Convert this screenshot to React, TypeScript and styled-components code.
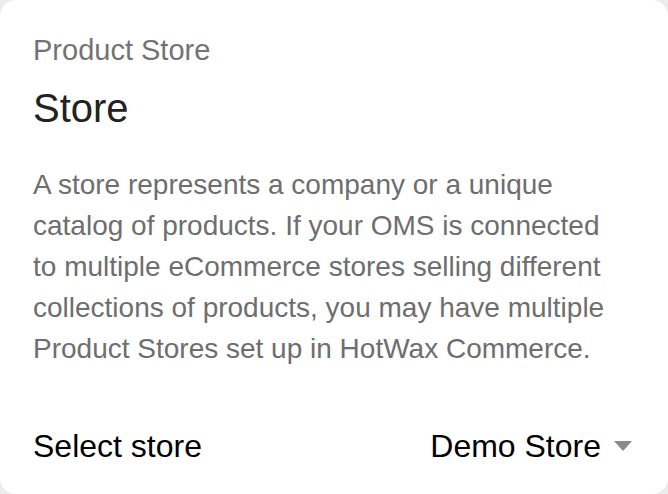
import React from "react";
import styled, { createGlobalStyle } from "styled-components";

const Global = createGlobalStyle`
  html, body { margin: 0; padding: 0; background: #ececec; }
  body { font-family: "Liberation Sans", Arial, Helvetica, sans-serif; }
`;

const Card = styled.div`
  box-sizing: border-box;
  width: 668px;
  height: 494px;
  background: #ffffff;
  border-radius: 16px;
  overflow: hidden;
  display: flex;
  flex-direction: column;
`;

const Header = styled.div`
  padding: 33px 33px 0;
  display: flex;
  flex-direction: column;
  gap: 17px;
`;

const Subtitle = styled.div`
  font-size: 29px;
  line-height: 34px;
  color: #737373;
`;

const Title = styled.div`
  font-size: 40px;
  line-height: 48px;
  color: #222222;
`;

const Content = styled.p`
  margin: 0;
  padding: 32px 50px 0 33px;
  font-size: 28px;
  line-height: 41px;
  color: #6e6e6e;
`;

const Row = styled.div`
  margin-top: auto;
  padding: 0 36px 18px 33px;
  height: 60px;
  display: flex;
  align-items: center;
  justify-content: space-between;
  font-size: 32px;
  color: #000;
`;

const SelectValue = styled.div`
  display: flex;
  align-items: center;
  gap: 13px;
`;

const Caret = styled.span`
  width: 0;
  height: 0;
  border-left: 9px solid transparent;
  border-right: 9px solid transparent;
  border-top: 10px solid #8a8a8a;
`;

export default function App() {
  return (
    <>
      <Global />
      <Card>
        <Header>
          <Subtitle>Product Store</Subtitle>
          <Title>Store</Title>
        </Header>
        <Content>
          A store represents a company or a unique catalog of products. If your
          OMS is connected to multiple eCommerce stores selling different
          collections of products, you may have multiple Product Stores set up
          in HotWax Commerce.
        </Content>
        <Row>
          <span>Select store</span>
          <SelectValue>
            <span>Demo Store</span>
            <Caret />
          </SelectValue>
        </Row>
      </Card>
    </>
  );
}
